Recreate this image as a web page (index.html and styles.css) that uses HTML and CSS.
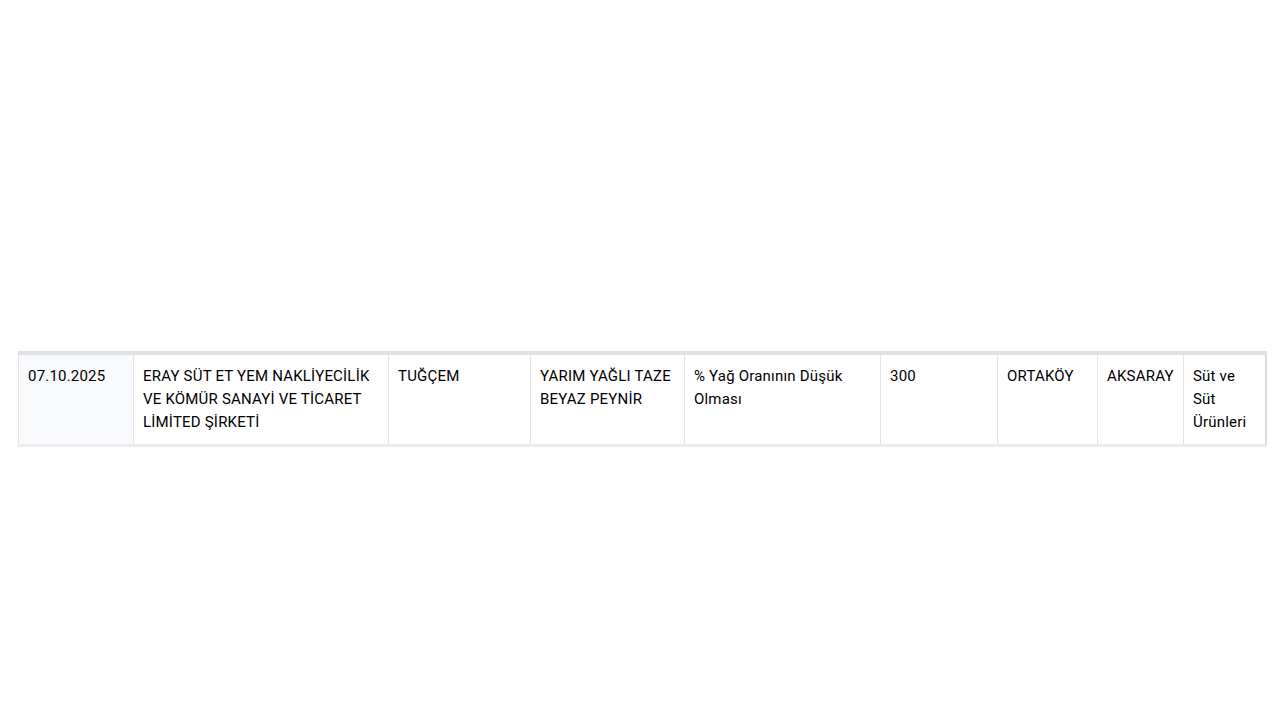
FILE: index.html
```html
<!DOCTYPE html>
<html lang="tr">
<head>
<meta charset="utf-8">
<link rel="stylesheet" href="styles.css">
</head>
<body>
<div class="page">
  <table class="grid">
    <colgroup>
      <col class="c1"><col class="c2"><col class="c3"><col class="c4"><col class="c5"><col class="c6"><col class="c7"><col class="c8"><col class="c9">
    </colgroup>
    <tbody>
      <tr>
        <td class="date">07.10.2025</td>
        <td>ERAY SÜT ET YEM NAKLİYECİLİK VE KÖMÜR SANAYİ VE TİCARET LİMİTED ŞİRKETİ</td>
        <td>TUĞÇEM</td>
        <td>YARIM YAĞLI TAZE BEYAZ PEYNİR</td>
        <td>% Yağ Oranının Düşük Olması</td>
        <td>300</td>
        <td>ORTAKÖY</td>
        <td>AKSARAY</td>
        <td>Süt ve Süt Ürünleri</td>
      </tr>
    </tbody>
  </table>
</div>
</body>
</html>
```

FILE: styles.css
```css
html, body {
  margin: 0;
  padding: 0;
  background: #ffffff;
}
.page {
  padding: 351px 14px 0 18px;
}
.grid {
  width: 1247px;
  border-collapse: collapse;
  table-layout: fixed;
  font-family: Roboto, "Liberation Sans", sans-serif;
  font-size: 15px;
  line-height: 23px;
  letter-spacing: 0.2px;
  color: #000000;
  border-top: 4px solid #e1e1e8;
  border-bottom: 3px solid #ececf0;
}
.c1 { width: 115px; }
.c2 { width: 255px; }
.c3 { width: 142px; }
.c4 { width: 154px; }
.c5 { width: 196px; }
.c6 { width: 117px; }
.c7 { width: 100px; }
.c8 { width: 86px; }
.c9 { width: 82px; }
.grid td {
  vertical-align: top;
  padding: 10px 9px 10px 9px;
  border-left: 1px solid #e3e3e3;
  border-right: 1px solid #e3e3e3;
  word-wrap: break-word;
}
.grid td:last-child {
  border-right: 2px solid #dcdcdc;
}
.grid td.date {
  background: #f9fafc;
}
```
